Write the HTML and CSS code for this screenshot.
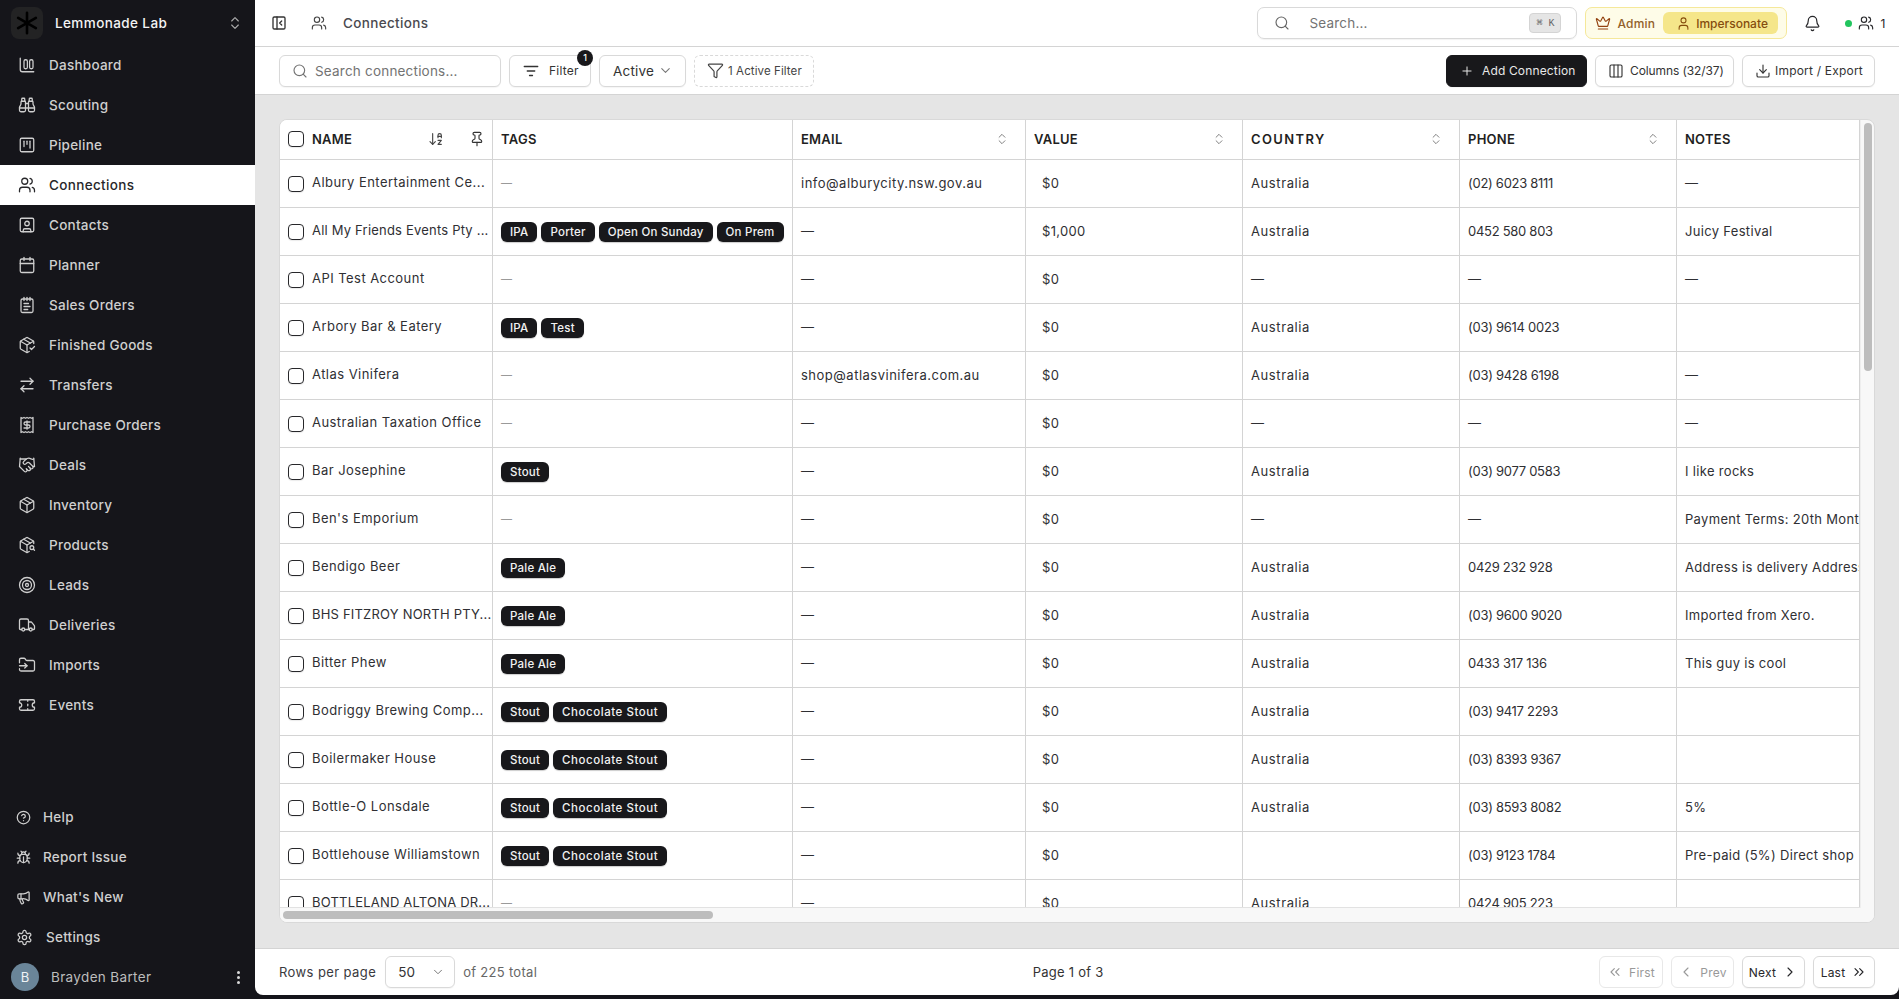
FILE: index.html
```html
<!DOCTYPE html>
<html lang="en">
<head>
<meta charset="utf-8">
<title>Connections</title>
<link rel="stylesheet" href="styles.css">
</head>
<body>
<svg class="defs" xmlns="http://www.w3.org/2000/svg">
<symbol id="i-dash" viewBox="0 0 24 24"><path d="M3 3v15a3 3 0 0 0 3 3h15"/><rect x="8" y="5" width="4.5" height="12" rx="2"/><rect x="15.5" y="5" width="4.5" height="12" rx="2"/></symbol>
<symbol id="i-bino" viewBox="0 0 24 24"><path d="M10 10h4"/><path d="M19 7V4a1 1 0 0 0-1-1h-2a1 1 0 0 0-1 1v3"/><path d="M20 21a2 2 0 0 0 2-2v-3.851c0-1.39-2-2.962-2-4.829V8a1 1 0 0 0-1-1h-4a1 1 0 0 0-1 1v11a2 2 0 0 0 2 2z"/><path d="M22 16H2"/><path d="M4 21a2 2 0 0 1-2-2v-3.851c0-1.39 2-2.962 2-4.829V8a1 1 0 0 1 1-1h4a1 1 0 0 1 1 1v11a2 2 0 0 1-2 2z"/><path d="M9 7V4a1 1 0 0 0-1-1H6a1 1 0 0 0-1 1v3"/></symbol>
<symbol id="i-kanban" viewBox="0 0 24 24"><rect x="3" y="3" width="18" height="18" rx="2"/><path d="M8 7v7"/><path d="M12 7v4"/><path d="M16 7v9"/></symbol>
<symbol id="i-users" viewBox="0 0 24 24"><path d="M16 3.128a4 4 0 0 1 0 7.744"/><path d="M22 21v-2a4 4 0 0 0-3-3.87"/><path d="M16 21v-2a4 4 0 0 0-4-4H6a4 4 0 0 0-4 4v2"/><circle cx="9" cy="7" r="4"/></symbol>
<symbol id="i-contact" viewBox="0 0 24 24"><rect x="3" y="3" width="18" height="18" rx="2"/><circle cx="12" cy="10" r="3"/><path d="M7 21v-2a2 2 0 0 1 2-2h6a2 2 0 0 1 2 2v2"/></symbol>
<symbol id="i-cal" viewBox="0 0 24 24"><path d="M8 2v4"/><path d="M16 2v4"/><rect x="3" y="4" width="18" height="18" rx="2"/><path d="M3 10h18"/></symbol>
<symbol id="i-note" viewBox="0 0 24 24"><path d="M8 2v4"/><path d="M12 2v4"/><path d="M16 2v4"/><rect x="4" y="4" width="16" height="18" rx="2"/><path d="M8 10h6"/><path d="M8 14h8"/><path d="M8 18h5"/></symbol>
<symbol id="i-pkcheck" viewBox="0 0 24 24"><path d="m16 16 2 2 4-4"/><path d="M21 10V8a2 2 0 0 0-1-1.73l-7-4a2 2 0 0 0-2 0l-7 4A2 2 0 0 0 3 8v8a2 2 0 0 0 1 1.73l7 4a2 2 0 0 0 2 0l2-1.14"/><path d="m7.5 4.27 9 5.15"/><path d="M3.29 7 12 12l8.71-5"/><path d="M12 22V12"/></symbol>
<symbol id="i-swap" viewBox="0 0 24 24"><path d="m16 3 4 4-4 4"/><path d="M20 7H4"/><path d="m8 21-4-4 4-4"/><path d="M4 17h16"/></symbol>
<symbol id="i-receipt" viewBox="0 0 24 24"><path d="M4 2v20l2-1 2 1 2-1 2 1 2-1 2 1 2-1 2 1V2l-2 1-2-1-2 1-2-1-2 1-2-1-2 1Z"/><path d="M16 8h-6a2 2 0 1 0 0 4h4a2 2 0 1 1 0 4H8"/><path d="M12 17.5v-11"/></symbol>
<symbol id="i-hands" viewBox="0 0 24 24"><path d="m11 17 2 2a1 1 0 1 0 3-3"/><path d="m14 14 2.5 2.5a1 1 0 1 0 3-3l-3.88-3.88a3 3 0 0 0-4.24 0l-.88.88a1 1 0 1 1-3-3l2.81-2.81a5.79 5.79 0 0 1 7.06-.87l.47.28a2 2 0 0 0 1.42.25L21 4"/><path d="m21 3 1 11h-2"/><path d="M3 3 2 14l6.5 6.5a1 1 0 1 0 3-3"/><path d="M3 4h8"/></symbol>
<symbol id="i-pkg" viewBox="0 0 24 24"><path d="M11 21.73a2 2 0 0 0 2 0l7-4A2 2 0 0 0 21 16V8a2 2 0 0 0-1-1.73l-7-4a2 2 0 0 0-2 0l-7 4A2 2 0 0 0 3 8v8a2 2 0 0 0 1 1.73z"/><path d="M12 22V12"/><path d="m3.3 7 8.7 5 8.7-5"/><path d="m7.5 4.27 9 5.15"/></symbol>
<symbol id="i-pksearch" viewBox="0 0 24 24"><path d="M21 10V8a2 2 0 0 0-1-1.73l-7-4a2 2 0 0 0-2 0l-7 4A2 2 0 0 0 3 8v8a2 2 0 0 0 1 1.73l7 4a2 2 0 0 0 2 0l2-1.14"/><path d="m7.5 4.27 9 5.15"/><path d="M3.29 7 12 12l8.71-5"/><path d="M12 22V12"/><circle cx="18.5" cy="15.5" r="2.5"/><path d="M20.27 17.27 22 19"/></symbol>
<symbol id="i-target" viewBox="0 0 24 24"><circle cx="12" cy="12" r="10"/><circle cx="12" cy="12" r="6"/><circle cx="12" cy="12" r="2"/></symbol>
<symbol id="i-truck" viewBox="0 0 24 24"><path d="M14 18V6a2 2 0 0 0-2-2H4a2 2 0 0 0-2 2v11a1 1 0 0 0 1 1h2"/><path d="M15 18H9"/><path d="M19 18h2a1 1 0 0 0 1-1v-3.65a1 1 0 0 0-.22-.624l-3.48-4.35A1 1 0 0 0 17.52 8H14"/><circle cx="17" cy="18" r="2"/><circle cx="7" cy="18" r="2"/></symbol>
<symbol id="i-folder" viewBox="0 0 24 24"><path d="M2 9V5a2 2 0 0 1 2-2h3.9a2 2 0 0 1 1.69.9l.81 1.2a2 2 0 0 0 1.67.9H20a2 2 0 0 1 2 2v10a2 2 0 0 1-2 2H4a2 2 0 0 1-2-2v-1"/><path d="M2 13h10"/><path d="m9 16 3-3-3-3"/></symbol>
<symbol id="i-ticket" viewBox="0 0 24 24"><path d="M2 9a3 3 0 0 1 0 6v2a2 2 0 0 0 2 2h16a2 2 0 0 0 2-2v-2a3 3 0 0 1 0-6V7a2 2 0 0 0-2-2H4a2 2 0 0 0-2 2Z"/><path d="M13 5v2"/><path d="M13 17v2"/><path d="M13 11v2"/></symbol>
<symbol id="i-help" viewBox="0 0 24 24"><circle cx="12" cy="12" r="10"/><path d="M9.09 9a3 3 0 0 1 5.83 1c0 2-3 3-3 3"/><path d="M12 17h.01"/></symbol>
<symbol id="i-bug" viewBox="0 0 24 24"><path d="m8 2 1.88 1.88"/><path d="M14.12 3.88 16 2"/><path d="M9 7.13v-1a3.003 3.003 0 1 1 6 0v1"/><path d="M12 20c-3.3 0-6-2.7-6-6v-3a4 4 0 0 1 4-4h4a4 4 0 0 1 4 4v3c0 3.3-2.7 6-6 6"/><path d="M12 20v-9"/><path d="M6.53 9C4.6 8.8 3 7.1 3 5"/><path d="M6 13H2"/><path d="M3 21c0-2.1 1.7-3.9 3.8-4"/><path d="M20.97 5c0 2.1-1.6 3.8-3.5 4"/><path d="M22 13h-4"/><path d="M17.2 17c2.1.1 3.8 1.9 3.8 4"/></symbol>
<symbol id="i-mega" viewBox="0 0 24 24"><path d="M11 6a13 13 0 0 0 8.400-2.800A1 1 0 0 1 21 4v12a1 1 0 0 1-1.600.8A13 13 0 0 0 11 14H5a2 2 0 0 1-2-2V8a2 2 0 0 1 2-2z"/><path d="M6 14a12 12 0 0 0 2.400 7.200 2 2 0 0 0 3.200-2.400A8 8 0 0 1 10 14"/><path d="M8 6v8"/></symbol>
<symbol id="i-gear" viewBox="0 0 24 24"><path d="M12.22 2h-.44a2 2 0 0 0-2 2v.18a2 2 0 0 1-1 1.73l-.43.25a2 2 0 0 1-2 0l-.15-.08a2 2 0 0 0-2.73.73l-.22.38a2 2 0 0 0 .73 2.73l.15.1a2 2 0 0 1 1 1.72v.51a2 2 0 0 1-1 1.74l-.15.09a2 2 0 0 0-.73 2.73l.22.38a2 2 0 0 0 2.73.73l.15-.08a2 2 0 0 1 2 0l.43.25a2 2 0 0 1 1 1.73V20a2 2 0 0 0 2 2h.44a2 2 0 0 0 2-2v-.18a2 2 0 0 1 1-1.73l.43-.25a2 2 0 0 1 2 0l.15.08a2 2 0 0 0 2.73-.73l.22-.39a2 2 0 0 0-.73-2.73l-.15-.08a2 2 0 0 1-1-1.74v-.5a2 2 0 0 1 1-1.74l.15-.09a2 2 0 0 0 .73-2.73l-.22-.38a2 2 0 0 0-2.73-.73l-.15.08a2 2 0 0 1-2 0l-.43-.25a2 2 0 0 1-1-1.73V4a2 2 0 0 0-2-2z"/><circle cx="12" cy="12" r="3"/></symbol>
<symbol id="i-updown" viewBox="0 0 24 24"><path d="m7 15 5 5 5-5"/><path d="m7 9 5-5 5 5"/></symbol>
<symbol id="i-search" viewBox="0 0 24 24"><circle cx="11" cy="11" r="8"/><path d="m21 21-4.3-4.3"/></symbol>
<symbol id="i-panel" viewBox="0 0 24 24"><rect x="3" y="3" width="18" height="18" rx="2"/><path d="M9 3v18"/><path d="m16 15-3-3 3-3"/></symbol>
<symbol id="i-crown" viewBox="0 0 24 24"><path d="M11.562 3.266a.5.5 0 0 1 .876 0L15.39 8.87a1 1 0 0 0 1.516.294L21.183 5.5a.5.5 0 0 1 .798.519l-2.834 10.246a1 1 0 0 1-.956.734H5.81a1 1 0 0 1-.957-.734L2.02 6.02a.5.5 0 0 1 .798-.519l4.276 3.664a1 1 0 0 0 1.516-.294z"/><path d="M5 21h14"/></symbol>
<symbol id="i-user" viewBox="0 0 24 24"><path d="M19 21v-2a4 4 0 0 0-4-4H9a4 4 0 0 0-4 4v2"/><circle cx="12" cy="7" r="4"/></symbol>
<symbol id="i-bell" viewBox="0 0 24 24"><path d="M10.268 21a2 2 0 0 0 3.464 0"/><path d="M3.262 15.326A1 1 0 0 0 4 17h16a1 1 0 0 0 .74-1.673C19.41 13.956 18 12.499 18 8A6 6 0 0 0 6 8c0 4.499-1.411 5.956-2.738 7.326"/></symbol>
<symbol id="i-lines" viewBox="0 0 24 24"><path d="M3 6h18"/><path d="M7 12h10"/><path d="M10 18h4"/></symbol>
<symbol id="i-down" viewBox="0 0 24 24"><path d="m6 9 6 6 6-6"/></symbol>
<symbol id="i-funnel" viewBox="0 0 24 24"><path d="M10 20a1 1 0 0 0 .553.895l2 1A1 1 0 0 0 14 21v-7a2 2 0 0 1 .517-1.341L21.74 4.67A1 1 0 0 0 21 3H3a1 1 0 0 0-.742 1.67l7.225 7.989A2 2 0 0 1 10 14z"/></symbol>
<symbol id="i-plus" viewBox="0 0 24 24"><path d="M5 12h14"/><path d="M12 5v14"/></symbol>
<symbol id="i-cols" viewBox="0 0 24 24"><rect x="3" y="3" width="18" height="18" rx="2"/><path d="M9 3v18"/><path d="M15 3v18"/></symbol>
<symbol id="i-import" viewBox="0 0 24 24"><path d="M12 3v12"/><path d="m7 10 5 5 5-5"/><path d="M3 15v4a2 2 0 0 0 2 2h14a2 2 0 0 0 2-2v-4"/></symbol>
<symbol id="i-sort" viewBox="0 0 24 24"><path d="m3 16 4 4 4-4"/><path d="M7 20V4"/><path d="M20 8h-5"/><path d="M15 10V6.5a2.5 2.5 0 0 1 5 0V10"/><path d="M15 14h5l-5 6h5"/></symbol>
<symbol id="i-pin" viewBox="0 0 24 24"><path d="M12 17v5"/><path d="M9 10.76a2 2 0 0 1-1.11 1.79l-1.78.9A2 2 0 0 0 5 15.24V16a1 1 0 0 0 1 1h12a1 1 0 0 0 1-1v-.76a2 2 0 0 0-1.11-1.79l-1.78-.9A2 2 0 0 1 15 10.76V7a1 1 0 0 1 1-1 2 2 0 0 0 0-4H8a2 2 0 0 0 0 4 1 1 0 0 1 1 1z"/></symbol>
<symbol id="i-left2" viewBox="0 0 24 24"><path d="m11 17-5-5 5-5"/><path d="m18 17-5-5 5-5"/></symbol>
<symbol id="i-right2" viewBox="0 0 24 24"><path d="m6 17 5-5-5-5"/><path d="m13 17 5-5-5-5"/></symbol>
<symbol id="i-left" viewBox="0 0 24 24"><path d="m15 18-6-6 6-6"/></symbol>
<symbol id="i-right" viewBox="0 0 24 24"><path d="m9 18 6-6-6-6"/></symbol>
</svg>

<div class="app">
  <aside class="sidebar">
    <div class="org">
      <span class="logo"><svg viewBox="0 0 24 24" class="logo-mark"><path d="M12 2.5v19M3.8 7.2l16.4 9.6M3.8 16.800l16.400-9.600"/></svg></span>
      <span class="org-name">Lemmonade Lab</span>
      <svg class="ic org-chev"><use href="#i-updown"/></svg>
    </div>
    <nav class="nav">
      <a class="nav-item"><svg class="ic"><use href="#i-dash"/></svg>Dashboard</a>
      <a class="nav-item"><svg class="ic"><use href="#i-bino"/></svg>Scouting</a>
      <a class="nav-item"><svg class="ic"><use href="#i-kanban"/></svg>Pipeline</a>
      <a class="nav-item active"><svg class="ic"><use href="#i-users"/></svg>Connections</a>
      <a class="nav-item"><svg class="ic"><use href="#i-contact"/></svg>Contacts</a>
      <a class="nav-item"><svg class="ic"><use href="#i-cal"/></svg>Planner</a>
      <a class="nav-item"><svg class="ic"><use href="#i-note"/></svg>Sales Orders</a>
      <a class="nav-item"><svg class="ic"><use href="#i-pkcheck"/></svg>Finished Goods</a>
      <a class="nav-item"><svg class="ic"><use href="#i-swap"/></svg>Transfers</a>
      <a class="nav-item"><svg class="ic"><use href="#i-receipt"/></svg>Purchase Orders</a>
      <a class="nav-item"><svg class="ic"><use href="#i-hands"/></svg>Deals</a>
      <a class="nav-item"><svg class="ic"><use href="#i-pkg"/></svg>Inventory</a>
      <a class="nav-item"><svg class="ic"><use href="#i-pksearch"/></svg>Products</a>
      <a class="nav-item"><svg class="ic"><use href="#i-target"/></svg>Leads</a>
      <a class="nav-item"><svg class="ic"><use href="#i-truck"/></svg>Deliveries</a>
      <a class="nav-item"><svg class="ic"><use href="#i-folder"/></svg>Imports</a>
      <a class="nav-item"><svg class="ic"><use href="#i-ticket"/></svg>Events</a>
    </nav>
    <div class="side-bottom">
      <a class="sub-item"><svg class="ic"><use href="#i-help"/></svg>Help</a>
      <a class="sub-item"><svg class="ic"><use href="#i-bug"/></svg>Report Issue</a>
      <a class="sub-item"><svg class="ic"><use href="#i-mega"/></svg>What's New</a>
      <a class="sub-item settings"><svg class="ic"><use href="#i-gear"/></svg>Settings</a>
      <div class="user">
        <span class="avatar">B</span>
        <span class="user-name">Brayden Barter</span>
        <span class="dots"><i></i><i></i><i></i></span>
      </div>
    </div>
  </aside>

  <main class="main">
    <header class="topbar">
      <svg class="ic panel-ic"><use href="#i-panel"/></svg>
      <svg class="ic crumb-ic"><use href="#i-users"/></svg>
      <span class="crumb">Connections</span>
      <div class="global-search">
        <svg class="ic"><use href="#i-search"/></svg>
        <span class="gs-text">Search...</span>
        <kbd class="kbd">⌘ K</kbd>
      </div>
      <div class="admin">
        <svg class="ic crown"><use href="#i-crown"/></svg>
        <span class="admin-label">Admin</span>
        <span class="imp"><svg class="ic"><use href="#i-user"/></svg>Impersonate</span>
      </div>
      <svg class="ic bell"><use href="#i-bell"/></svg>
      <span class="online"></span>
      <svg class="ic online-ic"><use href="#i-users"/></svg>
      <span class="online-n">1</span>
    </header>

    <div class="toolbar">
      <div class="box tb-search"><svg class="ic"><use href="#i-search"/></svg><span>Search connections...</span></div>
      <div class="box tb-filter"><svg class="ic"><use href="#i-lines"/></svg><span>Filter</span><b class="badge">1</b></div>
      <div class="box tb-active"><span>Active</span><svg class="ic"><use href="#i-down"/></svg></div>
      <div class="box tb-af"><svg class="ic"><use href="#i-funnel"/></svg><span>1 Active Filter</span></div>
      <div class="box tb-add"><svg class="ic"><use href="#i-plus"/></svg><span>Add Connection</span></div>
      <div class="box tb-cols"><svg class="ic"><use href="#i-cols"/></svg><span>Columns (32/37)</span></div>
      <div class="box tb-imp"><svg class="ic"><use href="#i-import"/></svg><span>Import / Export</span></div>
    </div>

    <section class="content">
      <div class="card">
        <div class="view">
          <table class="grid">
            <colgroup><col class="c1"><col class="c2"><col class="c3"><col class="c4"><col class="c4"><col class="c4"><col class="c5"></colgroup>
            <thead>
              <tr>
                <th><div class="nh"><span class="cb"></span><span class="nh-t">NAME</span><svg class="ic sort"><use href="#i-sort"/></svg><svg class="ic pin"><use href="#i-pin"/></svg></div></th>
                <th>TAGS</th>
                <th><div class="th-s">EMAIL<svg class="ic ud"><use href="#i-updown"/></svg></div></th>
                <th><div class="th-s">VALUE<svg class="ic ud"><use href="#i-updown"/></svg></div></th>
                <th><div class="th-s th-wide">COUNTRY<svg class="ic ud"><use href="#i-updown"/></svg></div></th>
                <th><div class="th-s">PHONE<svg class="ic ud"><use href="#i-updown"/></svg></div></th>
                <th>NOTES</th>
              </tr>
            </thead>
            <tbody>
              <tr><td><div class="nm"><span class="cb"></span><span>Albury Entertainment Ce...</span></div></td><td class="nt">—</td><td class="em">info@alburycity.nsw.gov.au</td><td class="val">$0</td><td class="ct">Australia</td><td class="ph">(02) 6023 8111</td><td>—</td></tr>
              <tr><td><div class="nm nm-tight"><span class="cb"></span><span>All My Friends Events Pty ...</span></div></td><td><div class="tags"><span class="tag">IPA</span><span class="tag">Porter</span><span class="tag">Open On Sunday</span><span class="tag">On Prem</span></div></td><td class="em">—</td><td class="val">$1,000</td><td class="ct">Australia</td><td class="ph">0452 580 803</td><td>Juicy Festival</td></tr>
              <tr><td><div class="nm"><span class="cb"></span><span>API Test Account</span></div></td><td class="nt">—</td><td class="em">—</td><td class="val">$0</td><td class="ct">—</td><td class="ph">—</td><td>—</td></tr>
              <tr><td><div class="nm"><span class="cb"></span><span>Arbory Bar &amp; Eatery</span></div></td><td><div class="tags"><span class="tag">IPA</span><span class="tag">Test</span></div></td><td class="em">—</td><td class="val">$0</td><td class="ct">Australia</td><td class="ph">(03) 9614 0023</td><td></td></tr>
              <tr><td><div class="nm"><span class="cb"></span><span>Atlas Vinifera</span></div></td><td class="nt">—</td><td class="em">shop@atlasvinifera.com.au</td><td class="val">$0</td><td class="ct">Australia</td><td class="ph">(03) 9428 6198</td><td>—</td></tr>
              <tr><td><div class="nm"><span class="cb"></span><span>Australian Taxation Office</span></div></td><td class="nt">—</td><td class="em">—</td><td class="val">$0</td><td class="ct">—</td><td class="ph">—</td><td>—</td></tr>
              <tr><td><div class="nm"><span class="cb"></span><span>Bar Josephine</span></div></td><td><div class="tags"><span class="tag">Stout</span></div></td><td class="em">—</td><td class="val">$0</td><td class="ct">Australia</td><td class="ph">(03) 9077 0583</td><td>I like rocks</td></tr>
              <tr><td><div class="nm"><span class="cb"></span><span>Ben's Emporium</span></div></td><td class="nt">—</td><td class="em">—</td><td class="val">$0</td><td class="ct">—</td><td class="ph">—</td><td>Payment Terms: 20th Month following</td></tr>
              <tr><td><div class="nm"><span class="cb"></span><span>Bendigo Beer</span></div></td><td><div class="tags"><span class="tag">Pale Ale</span></div></td><td class="em">—</td><td class="val">$0</td><td class="ct">Australia</td><td class="ph">0429 232 928</td><td>Address is delivery Address</td></tr>
              <tr><td><div class="nm nm-tight"><span class="cb"></span><span>BHS FITZROY NORTH PTY...</span></div></td><td><div class="tags"><span class="tag">Pale Ale</span></div></td><td class="em">—</td><td class="val">$0</td><td class="ct">Australia</td><td class="ph">(03) 9600 9020</td><td>Imported from Xero.</td></tr>
              <tr><td><div class="nm"><span class="cb"></span><span>Bitter Phew</span></div></td><td><div class="tags"><span class="tag">Pale Ale</span></div></td><td class="em">—</td><td class="val">$0</td><td class="ct">Australia</td><td class="ph">0433 317 136</td><td>This guy is cool</td></tr>
              <tr><td><div class="nm"><span class="cb"></span><span>Bodriggy Brewing Comp...</span></div></td><td><div class="tags"><span class="tag">Stout</span><span class="tag tag-long">Chocolate Stout</span></div></td><td class="em">—</td><td class="val">$0</td><td class="ct">Australia</td><td class="ph">(03) 9417 2293</td><td></td></tr>
              <tr><td><div class="nm"><span class="cb"></span><span>Boilermaker House</span></div></td><td><div class="tags"><span class="tag">Stout</span><span class="tag tag-long">Chocolate Stout</span></div></td><td class="em">—</td><td class="val">$0</td><td class="ct">Australia</td><td class="ph">(03) 8393 9367</td><td></td></tr>
              <tr><td><div class="nm"><span class="cb"></span><span>Bottle-O Lonsdale</span></div></td><td><div class="tags"><span class="tag">Stout</span><span class="tag tag-long">Chocolate Stout</span></div></td><td class="em">—</td><td class="val">$0</td><td class="ct">Australia</td><td class="ph">(03) 8593 8082</td><td>5%</td></tr>
              <tr><td><div class="nm"><span class="cb"></span><span>Bottlehouse Williamstown</span></div></td><td><div class="tags"><span class="tag">Stout</span><span class="tag tag-long">Chocolate Stout</span></div></td><td class="em">—</td><td class="val">$0</td><td class="ct"></td><td class="ph">(03) 9123 1784</td><td>Pre-paid (5%) Direct shop</td></tr>
              <tr><td><div class="nm nm-tight"><span class="cb"></span><span>BOTTLELAND ALTONA DR...</span></div></td><td class="nt">—</td><td class="em">—</td><td class="val">$0</td><td class="ct">Australia</td><td class="ph">0424 905 223</td><td></td></tr>
            </tbody>
          </table>
        </div>
        <div class="vtrack"><div class="vthumb"></div></div>
        <div class="htrack"><div class="hthumb"></div></div>
        <div class="corner"></div>
      </div>
    </section>

    <footer class="footer">
      <div class="f-left">
        <span class="f-rows">Rows per page</span>
        <div class="box f-sel"><span>50</span><svg class="ic"><use href="#i-down"/></svg></div>
        <span class="f-total">of 225 total</span>
      </div>
      <div class="f-page">Page 1 of 3</div>
      <div class="f-right">
        <div class="box pg off pg-first"><svg class="ic"><use href="#i-left2"/></svg>First</div>
        <div class="box pg off pg-prev"><svg class="ic"><use href="#i-left"/></svg>Prev</div>
        <div class="box pg pg-next">Next<svg class="ic"><use href="#i-right"/></svg></div>
        <div class="box pg pg-last">Last<svg class="ic"><use href="#i-right2"/></svg></div>
      </div>
    </footer>
  </main>
</div>
</body>
</html>
```
FILE: styles.css
```css
* { box-sizing: border-box; }
html, body { margin: 0; height: 100%; }
body {
  background: #15151a;
  color: #27272a;
  font-family: Inter, "Liberation Sans", sans-serif;
  font-size: 13px;
  letter-spacing: .2px;
  overflow: hidden;
}
.defs { display: none; }
.ic { fill: none; stroke: currentColor; stroke-width: 1.7; stroke-linecap: round; stroke-linejoin: round; flex: none; width: 18px; height: 18px; }

.app { display: flex; width: 1899px; height: 999px; }

/* sidebar */
.sidebar { width: 255px; flex: none; height: 999px; display: flex; flex-direction: column; background: #15151a; color: #cfcfcf; }
.org { height: 45px; display: flex; align-items: center; padding: 0 0 0 11px; flex: none; }
.logo { width: 32px; height: 32px; border-radius: 8px; background: #232324; display: flex; align-items: center; justify-content: center; }
.logo-mark { width: 26px; height: 26px; fill: none; stroke: #000; stroke-width: 2.4; stroke-linecap: round; }
.org-name { margin-left: 12px; color: #f4f4f4; font-size: 13.5px; font-weight: 500; letter-spacing: .4px; }
.org-chev { width: 16px; height: 16px; margin-left: auto; margin-right: 12px; color: #aaa; }
.nav { display: flex; flex-direction: column; }
.nav-item { height: 40px; display: flex; align-items: center; gap: 13px; padding-left: 18px; font-size: 13.5px; font-weight: 500; letter-spacing: .25px; }
.nav-item.active { background: #fff; color: #27272a; letter-spacing: .35px; }
.side-bottom { margin-top: auto; display: flex; flex-direction: column; }
.sub-item { height: 40px; display: flex; align-items: center; gap: 12px; padding-left: 16px; font-size: 13.5px; font-weight: 500; letter-spacing: .25px; }
.sub-item .ic { width: 15px; height: 15px; stroke-width: 2; }
.sub-item.settings { gap: 13px; }
.sub-item.settings .ic { width: 17px; height: 17px; stroke-width: 1.8; }
.user { height: 42px; display: flex; align-items: center; padding: 0 12px 2px 11px; }
.avatar { width: 28px; height: 28px; border-radius: 50%; background: #6a8599; color: #eef2f5; display: flex; align-items: center; justify-content: center; font-size: 13px; }
.user-name { margin-left: 12px; font-size: 13.5px; letter-spacing: .35px; color: #bdbdbd; }
.dots { margin-left: auto; margin-right: 1px; display: flex; flex-direction: column; gap: 2px; padding: 0 2px; }
.dots i { width: 3px; height: 3px; border-radius: 50%; background: #d8d8d8; display: block; }

/* main */
.main { flex: 1; height: 995px; min-width: 0; display: flex; flex-direction: column; background: #fff; border-radius: 0 0 8px 8px; overflow: hidden; }

.topbar { height: 47px; flex: none; display: flex; align-items: center; border-bottom: 1px solid #d4d4d4; padding-left: 16px; }
.panel-ic { width: 16px; height: 16px; color: #333; stroke-width: 2; }
.crumb-ic { width: 16px; height: 16px; margin-left: 24px; color: #444; }
.crumb { margin-left: 16px; font-size: 13.5px; font-weight: 500; color: #4a4a4f; letter-spacing: .35px; }
.global-search { margin-left: 829px; width: 320px; height: 32px; border: 1px solid #d9d9d9; border-radius: 7px; display: flex; align-items: center; padding: 0 16px; color: #666; box-shadow: 0 1px 1px rgba(0,0,0,.05); }
.global-search .ic { width: 16px; height: 16px; }
.gs-text { margin-left: 19px; font-size: 13.5px; color: #737373; }
.kbd { margin-left: auto; margin-right: -1px; width: 32px; height: 20px; background: #e5e5e5; border: 1px solid #d4d4d4; border-radius: 4px; display: flex; align-items: center; justify-content: center; font-family: "Liberation Mono", monospace; font-size: 10px; color: #666; letter-spacing: 0; }
.admin { margin-left: 8px; width: 202px; height: 32px; background: #fefce8; border: 1px solid #f5e89a; border-radius: 7px; display: flex; align-items: center; padding-left: 9px; color: #92602a; font-weight: 500; font-size: 12px; }
.crown { width: 16px; height: 16px; color: #92400e; }
.admin-label { margin-left: 6px; }
.imp { margin-left: 8px; width: 115px; height: 22px; border-radius: 6px; background: #f5e68a; color: #854d0e; display: flex; align-items: center; gap: 5px; padding-left: 13px; white-space: nowrap; letter-spacing: 0; }
.imp .ic { width: 15px; height: 15px; }
.bell { margin-left: 17px; width: 17px; height: 17px; color: #27272a; }
.online { margin-left: 24px; width: 7px; height: 7px; background: #22c55e; border-radius: 50%; }
.online-ic { margin-left: 6px; width: 16px; height: 16px; color: #27272a; }
.online-n { margin-left: 6px; font-size: 12px; }

.toolbar { height: 48px; flex: none; border-bottom: 1px solid #d4d4d4; display: flex; align-items: center; padding: 0 24px; gap: 8px; }
.box { height: 32px; border: 1px solid #d9d9d9; border-radius: 6px; background: #fff; display: flex; align-items: center; box-shadow: 0 1px 1px rgba(0,0,0,.04); white-space: nowrap; }
.tb-search { width: 222px; padding-left: 12px; gap: 7px; font-size: 13.5px; color: #737373; }
.tb-search .ic { width: 16px; height: 16px; }
.tb-filter { width: 82px; padding-left: 12px; gap: 9px; font-size: 12px; position: relative; color: #333; }
.tb-filter .ic { width: 18px; height: 18px; }
.badge { position: absolute; right: -3px; top: -6px; width: 16px; height: 16px; border-radius: 50%; background: #18181b; color: #fff; font-size: 9px; font-weight: 500; display: flex; align-items: center; justify-content: center; letter-spacing: 0; }
.tb-active { width: 87px; padding-left: 13px; gap: 4px; font-size: 13.5px; color: #333; }
.tb-active .ic { width: 15px; height: 15px; color: #777; }
.tb-af { width: 120px; padding-left: 12px; gap: 4px; border-style: dashed; font-size: 11.5px; color: #444; box-shadow: none; letter-spacing: .1px; }
.tb-af .ic { width: 17px; height: 17px; }
.tb-add { margin-left: auto; width: 141px; background: #18181b; border-color: #18181b; color: #e8e8e8; padding-left: 13px; gap: 8px; font-size: 12px; letter-spacing: .15px; }
.tb-add .ic { width: 14px; height: 14px; }
.tb-cols { width: 139px; padding-left: 12px; gap: 6px; font-size: 12px; color: #333; letter-spacing: -.1px; }
.tb-cols .ic { width: 16px; height: 16px; }
.tb-imp { width: 133px; padding-left: 12px; gap: 4px; font-size: 12px; color: #333; }
.tb-imp .ic { width: 16px; height: 16px; }

/* content */
.content { flex: 1; min-height: 0; background: #e5e5e5; padding: 24px 24px 25px 24px; }
.card { height: 100%; background: #f8f8f8; border: 1px solid #d9d9d9; border-radius: 8px; overflow: hidden; display: grid; grid-template-columns: 1580px 1fr; grid-template-rows: 1fr 14px; }
.view { overflow: hidden; min-height: 0; background: #fff; border-bottom: 1px solid #e2e2e2; }
.grid { border-collapse: separate; border-spacing: 0; table-layout: fixed; width: 1580px; }
.c1 { width: 213px; } .c2 { width: 300px; } .c3 { width: 233px; } .c4 { width: 217px; } .c5 { width: 183px; }
th, td { border-right: 1px solid #d4d4d4; border-bottom: 1px solid #d4d4d4; padding: 0 8px; white-space: nowrap; overflow: hidden; text-align: left; }
th { height: 40px; font-size: 13px; font-weight: 600; color: #1f1f22; letter-spacing: .25px; padding-bottom: 1px; }
td { height: 48px; font-size: 13px; color: #2f2f33; letter-spacing: .32px; padding-bottom: 2px; }
td.em { letter-spacing: .5px; }
td.ct { letter-spacing: .6px; }
td.ph { letter-spacing: -.28px; }
.nt { color: #9a9a9a; font-size: 11px; }
td.val { padding-left: 16px; }
.cb { width: 16px; height: 16px; flex: none; border: 1.3px solid #27272a; border-radius: 4px; box-shadow: 0 1px 1px rgba(0,0,0,.08); display: block; }
.nh, .nm { display: flex; align-items: center; gap: 8px; }
.nm { margin-top: 2px; letter-spacing: .45px; }
.nm-tight { letter-spacing: .2px; }
.nm span:last-child { margin-top: -3px; }
.nh-t { flex: none; width: 108px; }
.sort { width: 16px; height: 16px; color: #444; }
.pin { width: 16px; height: 16px; margin-left: 17px; color: #333; }
.th-s { display: flex; align-items: center; justify-content: space-between; padding-right: 8px; }
.th-wide { letter-spacing: 1.4px; }
.ud { width: 14px; height: 14px; color: #777; stroke-width: 1.6; }
.tags { display: flex; gap: 4px; margin-top: 2px; }
.tag { height: 20px; display: flex; align-items: center; padding: 0 9px; background: #18181b; color: #f2f2f2; border-radius: 6px; font-size: 11.5px; font-weight: 500; letter-spacing: .22px; box-shadow: 0 1px 1px rgba(0,0,0,.2); }
.tag-long { letter-spacing: .55px; }

.vtrack { padding: 3px 3px 0 3px; border-left: 1px solid #eee; }
.vthumb { width: 8px; height: 248px; background: #bdbdbd; border-radius: 4px; }
.htrack { padding: 3px 0 0 3px; background: #f8f8f8; }
.hthumb { width: 430px; height: 8px; background: #bdbdbd; border-radius: 4px; }
.corner { background: #f8f8f8; }

/* footer */
.footer { height: 47px; flex: none; border-top: 1px solid #d4d4d4; display: flex; align-items: center; justify-content: space-between; padding: 0 24px; font-size: 13px; }
.f-left, .f-right { display: flex; align-items: center; }
.f-rows { color: #3a3a3e; letter-spacing: .4px; }
.f-sel { width: 70px; margin-left: 9px; padding-left: 12px; gap: 16px; font-size: 13.5px; color: #333; }
.f-sel .ic { width: 14px; height: 14px; color: #777; }
.f-total { margin-left: 8px; color: #666; letter-spacing: .3px; }
.f-page { color: #333; letter-spacing: .25px; }
.f-right { gap: 8px; }
.pg { height: 32px; font-size: 12px; justify-content: center; gap: 6px; color: #27272a; }
.pg .ic { width: 16px; height: 16px; }
.pg.off { color: #999; border-color: #e8e8e8; box-shadow: none; }
.pg-first { width: 64px; } .pg-prev { width: 63px; } .pg-next { width: 63px; } .pg-last { width: 62px; }
```
